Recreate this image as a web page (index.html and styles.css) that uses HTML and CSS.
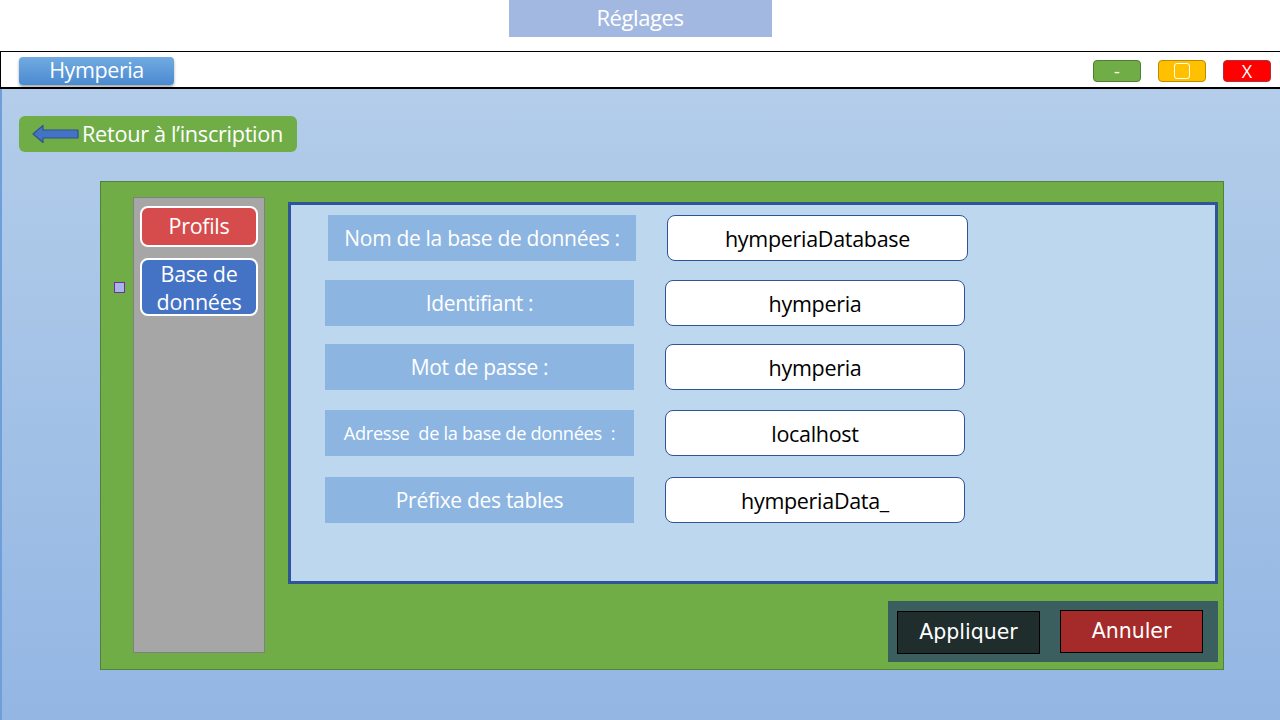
FILE: index.html
```html
<!DOCTYPE html>
<html lang="fr">
<head>
<meta charset="utf-8">
<title>Réglages</title>
<link rel="stylesheet" href="styles.css">
</head>
<body>
<header class="top">
  <div class="title">Réglages</div>
</header>
<div class="winbar">
  <div class="app-btn">Hymperia</div>
  <div class="controls">
    <div class="ctl ctl-min">-</div>
    <div class="ctl ctl-max"><span class="sq"></span></div>
    <div class="ctl ctl-close">X</div>
  </div>
</div>
<main class="main">
  <div class="back">
    <svg class="arrow" width="48" height="20" viewBox="0 0 48 20">
      <path d="M1 10 L11 1.5 L11 6 L46 6 L46 14 L11 14 L11 18.5 Z" fill="#4472c4" stroke="#2f528f" stroke-width="1.2" stroke-linejoin="round"/>
    </svg>
    <span>Retour à l’inscription</span>
  </div>
  <section class="panel">
    <div class="marker"></div>
    <nav class="sidebar">
      <div class="tab tab-profils">Profils</div>
      <div class="tab tab-db">Base de données</div>
    </nav>
    <div class="content">
      <div class="form">
        <div class="row row-first">
          <div class="label">Nom de la base de données :</div>
          <div class="field">hymperiaDatabase</div>
        </div>
        <div class="row">
          <div class="label">Identifiant :</div>
          <div class="field">hymperia</div>
        </div>
        <div class="row row-3">
          <div class="label">Mot de passe :</div>
          <div class="field">hymperia</div>
        </div>
        <div class="row row-4">
          <div class="label label-small">Adresse&nbsp; de la base de données &nbsp;:</div>
          <div class="field">localhost</div>
        </div>
        <div class="row row-5">
          <div class="label">Préfixe des tables</div>
          <div class="field">hymperiaData_</div>
        </div>
      </div>
      <div class="actions">
        <button class="btn btn-apply">Appliquer</button>
        <button class="btn btn-cancel">Annuler</button>
      </div>
    </div>
  </section>
</main>
</body>
</html>
```
FILE: styles.css
```css
* { box-sizing: border-box; }
html, body { margin: 0; padding: 0; }
body {
  width: 1280px;
  height: 720px;
  overflow: hidden;
  font-family: "Open Sans", "Noto Sans", sans-serif;
  background: #fff;
  display: flex;
  flex-direction: column;
}
.top {
  height: 51px;
  display: flex;
  justify-content: center;
}
.title {
  width: 263px;
  height: 37px;
  padding-bottom: 3px;
  background: #a3b8e0;
  color: #fff;
  font-size: 22px;
  display: flex;
  align-items: center;
  justify-content: center;
  letter-spacing: -0.4px;
}
.winbar {
  height: 38px;
  border-top: 1px solid #000;
  border-bottom: 2px solid #000;
  border-left: 1px solid #000;
  display: flex;
  align-items: center;
  justify-content: space-between;
  padding: 0 9px 0 18px;
  background: #fff;
}
.app-btn {
  width: 155px;
  height: 28px;
  margin-top: 2px;
  padding-bottom: 2px;
  border-radius: 4px;
  background: linear-gradient(#72abe2, #4a8ad0);
  box-shadow: 0 2px 3px rgba(0,0,0,0.35);
  color: #fff;
  font-size: 21.5px;
  display: flex;
  align-items: center;
  justify-content: center;
  letter-spacing: -0.4px;
}
.controls {
  display: flex;
  gap: 17px;
  margin-top: 2px;
}
.ctl {
  width: 48px;
  height: 22px;
  border-radius: 4px;
  color: #fff;
  font-size: 18px;
  display: flex;
  align-items: center;
  justify-content: center;
}
.ctl-min { background: #70ad47; border: 1px solid #507e32; }
.ctl-max { background: #ffc000; border: 1px solid #bc8c00; }
.ctl-max .sq {
  width: 16px; height: 16px;
  border: 1.5px solid #fff;
  border-radius: 3px;
}
.ctl-close { background: #ff0000; border: 1px solid #b0303a; }

.main {
  flex: 1;
  background: linear-gradient(#b3cdea, #93b6e3);
  border-left: 2px solid #6f9fd8;
  padding: 27px 0 0 17px;
  display: flex;
  flex-direction: column;
  align-items: flex-start;
}
.back {
  width: 278px;
  height: 36px;
  background: #70ad47;
  border-radius: 6px;
  display: flex;
  align-items: center;
  padding-left: 13px;
  padding-bottom: 1px;
  gap: 2px;
  color: #fff;
  font-size: 21.7px;
  letter-spacing: -0.3px;
  white-space: nowrap;
}
.arrow { flex: none; }

.panel {
  margin: 29px 0 0 81px;
  width: 1124px;
  height: 489px;
  background: #70ad47;
  border: 1px solid #548235;
  display: flex;
  align-items: flex-start;
  padding: 15px 6px 16px 13px;
}
.marker {
  width: 11px;
  height: 11px;
  background: #a9b4ea;
  border: 1px solid #7030a0;
  margin-top: 85px;
  margin-right: 8px;
  flex: none;
}
.sidebar {
  width: 132px;
  height: 456px;
  background: #a6a6a6;
  border: 1px solid #808080;
  padding: 8px 6px;
  display: flex;
  flex-direction: column;
  gap: 11px;
  flex: none;
}
.tab {
  border: 2px solid #fff;
  border-radius: 8px;
  color: #fff;
  font-size: 21.5px;
  text-align: center;
  letter-spacing: -0.3px;
}
.tab-profils { background: #d64b4b; height: 41px; line-height: 36px; }
.tab-db { background: #4472c4; height: 58px; padding: 0 4px; line-height: 28px; }

.content {
  margin-left: 23px;
  margin-top: 5px;
  flex: 1;
  display: flex;
  flex-direction: column;
  align-items: flex-end;
  gap: 17px;
}
.form {
  width: 930px;
  height: 382px;
  background: #bdd7ee;
  border: 3px solid #2f5597;
  padding: 10px 0 0 34px;
  display: flex;
  flex-direction: column;
  gap: 19px;
}
.row {
  display: flex;
  gap: 31px;
}
.row-3 { margin-top: -1px; }
.row-4 { margin-top: 1px; }
.row-5 { margin-top: 2px; }
.label {
  width: 309px;
  height: 46px;
  background: #8db5e2;
  color: #fff;
  font-size: 21px;
  display: flex;
  align-items: center;
  justify-content: center;
  letter-spacing: -0.3px;
  white-space: nowrap;
}
.label-small { font-size: 18.2px; }
.field {
  width: 300px;
  height: 46px;
  background: #fff;
  border: 1px solid #2f5597;
  border-radius: 8px;
  color: #000;
  font-size: 21.5px;
  display: flex;
  align-items: center;
  justify-content: center;
  letter-spacing: -0.3px;
}
.row-first { padding-left: 3px; }
.row-first .label { width: 308px; }
.row-first .field { width: 301px; }

.actions {
  width: 330px;
  height: 61px;
  background: #3b5e5e;
  display: flex;
  align-items: center;
  padding: 0 15px 0 9px;
  gap: 20px;
}
.btn {
  width: 143px;
  height: 43px;
  border: 1px solid #000;
  color: #fff;
  font-family: "DejaVu Sans", sans-serif;
  font-size: 20.5px;
  padding: 0;
}
.btn-apply { background: #1f2d2d; margin-top: 1px; }
.btn-cancel { background: #a52a2a; margin-top: -1px; }
```
